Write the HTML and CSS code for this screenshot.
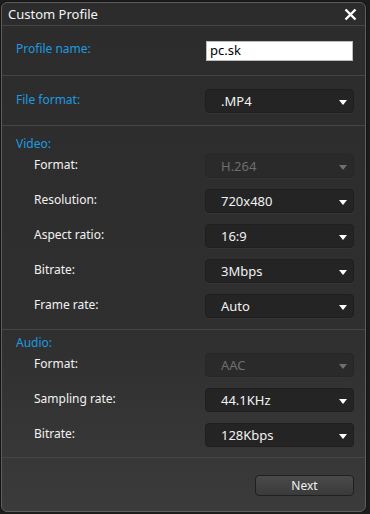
FILE: index.html
```html
<!DOCTYPE html>
<html lang="en">
<head>
<meta charset="UTF-8">
<title>Custom Profile</title>
<link rel="stylesheet" href="styles.css">
</head>
<body>
<div class="window">
  <div class="titlebar">
    <span class="title">Custom Profile</span>
    <span class="close">
      <svg width="13" height="13" viewBox="0 0 13 13"><path d="M1.5 1.5 L11.5 11.5 M11.5 1.5 L1.5 11.5" stroke="#fff" stroke-width="2.4"/></svg>
    </span>
  </div>

  <div class="section sec-name">
    <div class="row">
      <span class="label head">Profile name:</span>
      <div class="input">pc.sk</div>
    </div>
  </div>

  <div class="section sec-file">
    <div class="row">
      <span class="label head">File format:</span>
      <div class="select"><span>.MP4</span><i class="arrow"></i></div>
    </div>
  </div>

  <div class="section sec-video">
    <div class="heading">Video:</div>
    <div class="row sub">
      <span class="label">Format:</span>
      <div class="select disabled"><span>H.264</span><i class="arrow"></i></div>
    </div>
    <div class="row sub">
      <span class="label">Resolution:</span>
      <div class="select"><span>720x480</span><i class="arrow"></i></div>
    </div>
    <div class="row sub">
      <span class="label">Aspect ratio:</span>
      <div class="select"><span>16:9</span><i class="arrow"></i></div>
    </div>
    <div class="row sub">
      <span class="label">Bitrate:</span>
      <div class="select"><span>3Mbps</span><i class="arrow"></i></div>
    </div>
    <div class="row sub">
      <span class="label">Frame rate:</span>
      <div class="select"><span>Auto</span><i class="arrow"></i></div>
    </div>
  </div>

  <div class="section sec-audio">
    <div class="heading">Audio:</div>
    <div class="row sub">
      <span class="label">Format:</span>
      <div class="select disabled"><span>AAC</span><i class="arrow"></i></div>
    </div>
    <div class="row sub">
      <span class="label">Sampling rate:</span>
      <div class="select"><span>44.1KHz</span><i class="arrow"></i></div>
    </div>
    <div class="row sub">
      <span class="label">Bitrate:</span>
      <div class="select"><span>128Kbps</span><i class="arrow"></i></div>
    </div>
  </div>

  <div class="footer">
    <button class="next-button">Next</button>
  </div>
</div>
</body>
</html>
```
FILE: styles.css
```css
body {
  margin: 0;
  background-color: #1c1c1c;
  font-family: "Noto Sans", "Open Sans", sans-serif;
  font-size: 12px;
  color: #f2f2f2;
}

.window {
  box-sizing: border-box;
  width: 365px;
  height: 510px;
  margin: 2px 0 0 1px;
  border: 1px solid #5e5e5e;
  border-radius: 6px;
  box-shadow: 0 0 0 1px #141414;
  background: linear-gradient(#2c2c2c 0%, #2f2f2f 65%, #3b3b3b 100%);
  display: flex;
  flex-direction: column;
  overflow: hidden;
}

.titlebar {
  height: 22px;
  display: flex;
  align-items: center;
  justify-content: space-between;
  padding: 0 8px 0 6px;
  border-bottom: 1px solid #454545;
}

.title {
  font-size: 13px;
  color: #f4f4f4;
}

.close {
  display: flex;
  margin-top: 1px;
}

.section {
  border-bottom: 1px solid #454545;
  padding-left: 14px;
  padding-right: 11px;
}

.sec-name {
  padding-top: 14px;
  padding-bottom: 14px;
}

.sec-file {
  padding-top: 13px;
  padding-bottom: 12px;
}

.sec-video {
  padding-top: 10px;
  padding-bottom: 11px;
}

.sec-audio {
  padding-top: 5px;
  padding-bottom: 10px;
}

.heading {
  color: #1d9be0;
  line-height: 16px;
  margin-bottom: 2px;
}

.row {
  display: flex;
  align-items: center;
  justify-content: space-between;
}

.row.sub {
  padding-left: 18px;
  margin-bottom: 11px;
}

.row.sub:last-child {
  margin-bottom: 0;
}

.label {
  padding-bottom: 4px;
}

.label.head {
  color: #1d9be0;
}

.input {
  box-sizing: border-box;
  width: 147px;
  height: 20px;
  margin-right: 1px;
  background-color: #fff;
  border: 1px solid #bdbdbd;
  color: #000;
  font-size: 13px;
  line-height: 17px;
  padding-left: 3px;
}

.select {
  box-sizing: border-box;
  width: 149px;
  height: 24px;
  border: 1px solid #1f1f1f;
  border-radius: 4px;
  background-color: #242424;
  box-shadow: 0 1px 0 #353535;
  display: flex;
  align-items: center;
  justify-content: space-between;
  padding: 0 6px 0 15px;
  font-size: 13px;
  color: #f2f2f2;
}

.arrow {
  width: 0;
  height: 0;
  border-left: 4px solid transparent;
  border-right: 4px solid transparent;
  border-top: 5px solid #fff;
  margin-top: 2px;
}

.select.disabled {
  background-color: #2a2a2a;
  border-color: #262626;
  color: #6e6e6e;
}

.select.disabled .arrow {
  border-top-color: #707070;
}

.footer {
  flex: 1;
  display: flex;
  justify-content: flex-end;
  align-items: flex-start;
  padding: 17px 11px 0 0;
}

.next-button {
  width: 99px;
  height: 21px;
  border: 1px solid #202020;
  border-radius: 4px;
  background: linear-gradient(#4a4a4a, #3a3a3a);
  color: #f2f2f2;
  font-family: "Noto Sans", "Open Sans", sans-serif;
  font-size: 12px;
  padding: 0;
  cursor: pointer;
}
```
